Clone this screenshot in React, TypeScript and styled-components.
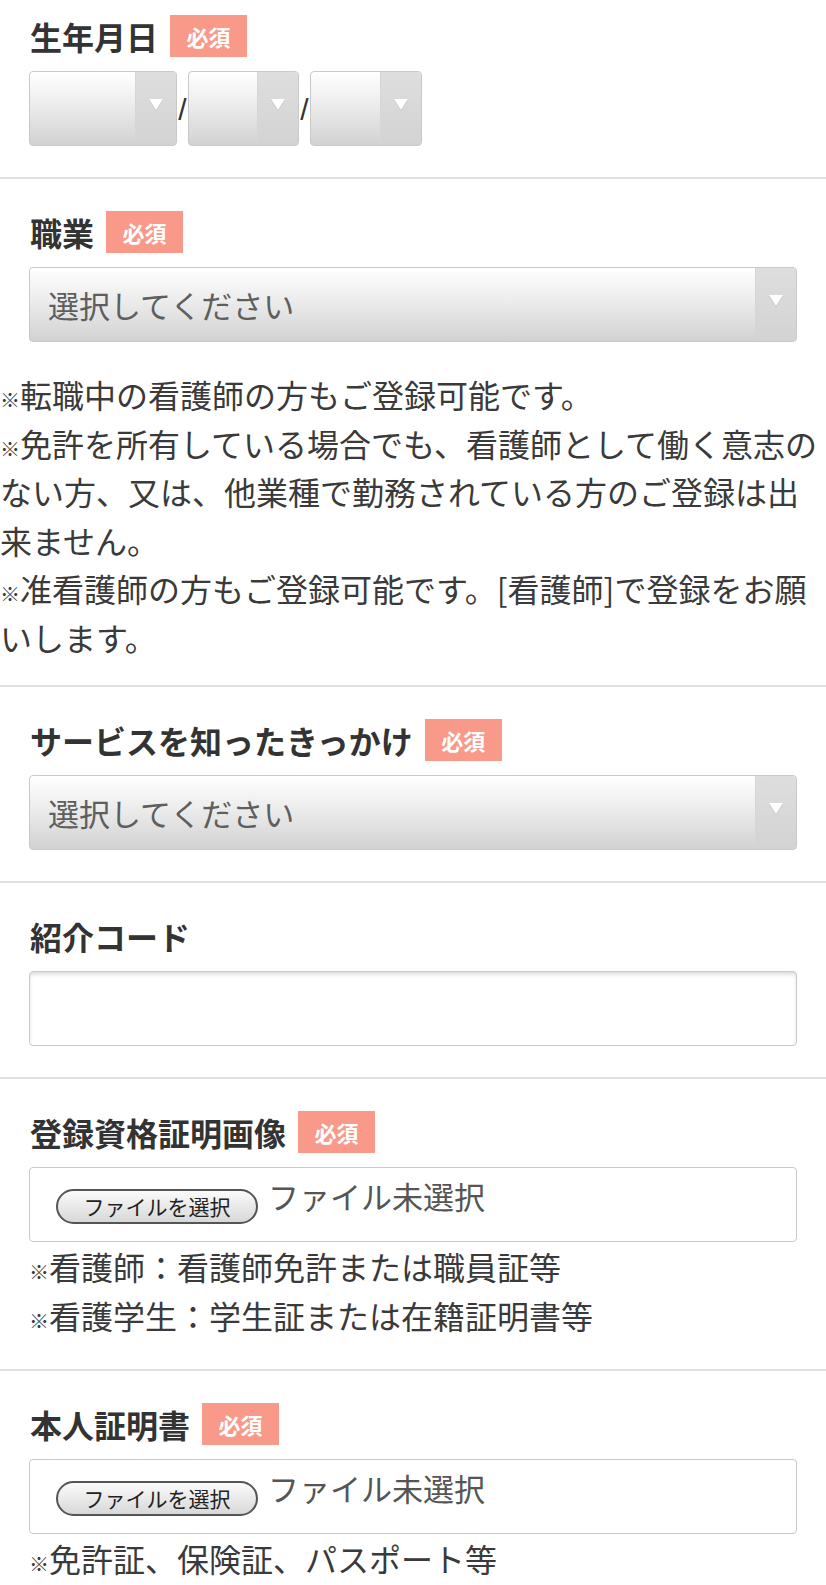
import React from "react";
import styled, { createGlobalStyle } from "styled-components";

const GlobalStyle = createGlobalStyle`
  html, body { margin: 0; padding: 0; background: #fff; }
  body {
    font-family: "Noto Sans CJK JP", "Noto Sans", sans-serif;
    color: #333;
  }
  * { box-sizing: border-box; }
`;

const Page = styled.div`
  width: 826px;
`;

const Section = styled.section<{ $top?: number; $bottom?: number }>`
  padding-top: ${(p) => p.$top ?? 32}px;
  padding-bottom: ${(p) => p.$bottom ?? 31}px;
  border-bottom: 2px solid #e0e0e0;
  &:last-child {
    border-bottom: none;
  }
`;

const Body = styled.div`
  padding: 0 29px;
`;

const LabelRow = styled.div`
  display: flex;
  align-items: center;
  gap: 12px;
  height: 42px;
  padding-left: 1px;
`;

const Label = styled.span`
  font-size: 32px;
  font-weight: 700;
  color: #333;
  line-height: 1;
`;

const Badge = styled.span`
  display: inline-flex;
  align-items: center;
  justify-content: center;
  height: 42px;
  width: 77px;
  background: #f8998a;
  color: #fff;
  font-size: 22px;
  font-weight: 700;
  line-height: 1;
`;

const Controls = styled.div`
  margin-top: 14px;
  display: flex;
  align-items: center;
`;

const SelectBox = styled.div<{ $width?: number }>`
  display: flex;
  flex: ${(p) => (p.$width ? "0 0 auto" : "1 1 auto")};
  width: ${(p) => (p.$width ? `${p.$width}px` : "100%")};
  height: 75px;
  border: 1px solid #c9c9c9;
  border-radius: 4px;
  background: linear-gradient(#ffffff 0%, #ececec 45%, #d2d2d2 100%);
  overflow: hidden;
`;

const SelectValue = styled.div`
  flex: 1;
  display: flex;
  align-items: center;
  padding-left: 18px;
  font-size: 31px;
  color: #5e5e5e;
  line-height: 1;
`;

const ArrowCell = styled.div`
  width: 41px;
  display: flex;
  justify-content: center;
  align-items: center;
  padding-bottom: 8px;
  background: linear-gradient(#dedede, #d3d3d3);
  border-left: 1px solid #d6d6d6;
`;

const Triangle = styled.span`
  width: 0;
  height: 0;
  border-left: 7px solid transparent;
  border-right: 7px solid transparent;
  border-top: 11px solid #fff;
  filter: drop-shadow(0 1px 0 rgba(0, 0, 0, 0.12));
`;

const Slash = styled.span`
  width: 11px;
  text-align: center;
  font-family: "Liberation Sans", sans-serif;
  font-size: 30px;
  color: #333;
  line-height: 1;
  padding-top: 2px;
`;

const TextInput = styled.input`
  display: block;
  flex: 1 1 auto;
  width: 100%;
  height: 75px;
  border: 1px solid #c9c9c9;
  border-radius: 4px;
  background: #fff;
  box-shadow: inset 0 3px 4px -1px rgba(0, 0, 0, 0.16);
  outline: none;
  font-size: 31px;
  padding: 0 18px;
`;

const FileBox = styled.div`
  display: flex;
  flex: 1 1 auto;
  align-items: flex-start;
  width: 100%;
  height: 75px;
  border: 1px solid #c9c9c9;
  border-radius: 4px;
  background: #fff;
  padding: 10px 0 0 26px;
`;

const FileButton = styled.button`
  margin-top: 11px;
  width: 202px;
  height: 35px;
  border: 2px solid #555;
  border-radius: 18px;
  background: linear-gradient(#fbfbfb, #d8d8d8);
  font-family: "Noto Sans CJK JP", sans-serif;
  font-size: 21px;
  color: #222;
  line-height: 1;
  padding: 0;
`;

const FileStatus = styled.span`
  margin-left: 10px;
  font-size: 31px;
  line-height: 36px;
  color: #555;
`;

const Notes = styled.div<{ $lh?: number; $mt?: number }>`
  margin-top: ${(p) => p.$mt ?? 0}px;
  font-size: 32px;
  line-height: ${(p) => p.$lh ?? 49}px;
  color: #3a3a3a;
  line-break: strict;
`;

const Line = styled.div``;

const Kome = styled.span`
  font-size: 20px;
  line-height: 1;
`;

const Select: React.FC<{ width?: number; placeholder?: string }> = ({ width, placeholder }) => (
  <SelectBox $width={width}>
    <SelectValue>{placeholder}</SelectValue>
    <ArrowCell>
      <Triangle />
    </ArrowCell>
  </SelectBox>
);

const FileInput: React.FC = () => (
  <FileBox>
    <FileButton type="button">ファイルを選択</FileButton>
    <FileStatus>ファイル未選択</FileStatus>
  </FileBox>
);

const Head: React.FC<{ label: string; required?: boolean }> = ({ label, required }) => (
  <LabelRow>
    <Label>{label}</Label>
    {required && <Badge>必須</Badge>}
  </LabelRow>
);

export default function App() {
  return (
    <Page>
      <GlobalStyle />
      <Section $top={15}>
        <Body>
          <Head label="生年月日" required />
          <Controls>
            <Select width={148} />
            <Slash>/</Slash>
            <Select width={111} />
            <Slash>/</Slash>
            <Select width={112} />
          </Controls>
        </Body>
      </Section>

      <Section $bottom={24}>
        <Body>
          <Head label="職業" required />
          <Controls>
            <Select placeholder="選択してください" />
          </Controls>
        </Body>
        <Notes $mt={28} $lh={48.5}>
          <Line>
            <Kome>※</Kome>転職中の看護師の方もご登録可能です。
          </Line>
          <Line>
            <Kome>※</Kome>免許を所有している場合でも、看護師として働く意志のない方、又は、他業種で勤務されている方のご登録は出来ません。
          </Line>
          <Line>
            <Kome>※</Kome>准看護師の方もご登録可能です。[看護師]で登録をお願いします。
          </Line>
        </Notes>
      </Section>

      <Section>
        <Body>
          <Head label="サービスを知ったきっかけ" required />
          <Controls>
            <Select placeholder="選択してください" />
          </Controls>
        </Body>
      </Section>

      <Section>
        <Body>
          <Head label="紹介コード" />
          <Controls>
            <TextInput type="text" />
          </Controls>
        </Body>
      </Section>

      <Section $bottom={29}>
        <Body>
          <Head label="登録資格証明画像" required />
          <Controls>
            <FileInput />
          </Controls>
          <Notes>
            <Line>
              <Kome>※</Kome>看護師：看護師免許または職員証等
            </Line>
            <Line>
              <Kome>※</Kome>看護学生：学生証または在籍証明書等
            </Line>
          </Notes>
        </Body>
      </Section>

      <Section>
        <Body>
          <Head label="本人証明書" required />
          <Controls>
            <FileInput />
          </Controls>
          <Notes>
            <Line>
              <Kome>※</Kome>免許証、保険証、パスポート等
            </Line>
          </Notes>
        </Body>
      </Section>
    </Page>
  );
}
